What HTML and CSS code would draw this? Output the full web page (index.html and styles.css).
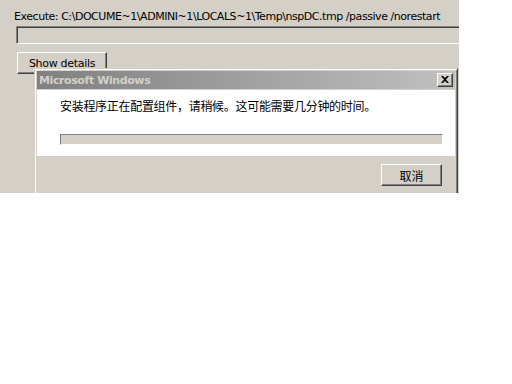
FILE: index.html
```html
<!DOCTYPE html>
<html>
<head>
<meta charset="utf-8">
<link rel="stylesheet" href="styles.css">
</head>
<body>
<div class="window">
  <div class="exec">Execute: C:\DOCUME~1\ADMINI~1\LOCALS~1\Temp\nspDC.tmp /passive /norestart</div>
  <div class="bar"></div>
  <div class="btn show"><span>Show <u>d</u>etails</span></div>

  <div class="dialog">
    <div class="title">
      <span class="title-text">Microsoft Windows</span>
      <span class="close"><svg width="8" height="7" viewBox="0 0 8 7"><path d="M0 0h2l2 2 2-2h2L5 3.5 8 7H6L4 5 2 7H0l3-3.5z" fill="#000"/></svg></span>
    </div>
    <div class="panel">
      <div class="msg">安装程序正在配置组件，请稍候。这可能需要几分钟的时间。</div>
      <div class="progress"></div>
    </div>
    <div class="footer">
      <div class="btn cancel"><span>取消</span></div>
    </div>
  </div>
</div>
</body>
</html>
```

FILE: styles.css
```css
html, body {
  margin: 0;
  padding: 0;
  background: #ffffff;
}
.window {
  position: relative;
  width: 459px;
  height: 193px;
  background: #d4d0c8;
  overflow: hidden;
  font-family: "DejaVu Sans", "Liberation Sans", sans-serif;
  font-size: 11px;
  color: #000;
}
.exec {
  padding: 10px 0 0 14px;
  height: 16px;
  line-height: 13px;
  white-space: nowrap;
  letter-spacing: -0.45px;
}
.bar {
  margin-left: 16px;
  width: 460px;
  height: 16px;
  border-top: 1px solid #808080;
  border-left: 1px solid #808080;
  border-bottom: 1px solid #ffffff;
  box-shadow: inset 1px 1px #404040;
}
.btn {
  box-sizing: border-box;
  border: 1px solid;
  border-color: #ffffff #404040 #404040 #ffffff;
  box-shadow: inset -1px -1px #808080;
  background: #d4d0c8;
  display: flex;
  align-items: center;
  justify-content: center;
}
.show {
  margin: 8px 0 0 17px;
  width: 90px;
  height: 22px;
  letter-spacing: -0.3px;
}
.show u {
  text-decoration-thickness: 1px;
  text-underline-offset: 1px;
}
.dialog {
  position: absolute;
  left: 34px;
  top: 68px;
  width: 424px;
  height: 150px;
  box-sizing: border-box;
  border: 1px solid;
  border-color: #d4d0c8 #404040 #404040 #d4d0c8;
  box-shadow: inset 1px 1px #ffffff, inset -1px -1px #808080;
  padding: 2px;
  background: #d4d0c8;
}
.title {
  height: 18px;
  background: linear-gradient(to right, #808080, #c0c0c0);
  display: flex;
  align-items: center;
  justify-content: space-between;
  padding: 0 2px 0 2px;
}
.title-text {
  color: #d4d0c8;
  font-weight: bold;
  letter-spacing: -0.4px;
}
.close {
  box-sizing: border-box;
  width: 16px;
  height: 14px;
  border: 1px solid;
  border-color: #ffffff #404040 #404040 #ffffff;
  box-shadow: inset -1px -1px #808080;
  background: #d4d0c8;
  display: flex;
  align-items: center;
  justify-content: center;
}
.close svg {
  display: block;
  margin: 0 1px 1px 0;
}
.panel {
  margin-top: 1px;
  height: 66px;
  background: #ffffff;
  padding: 0 12px 0 23px;
  box-sizing: border-box;
  display: flex;
  flex-direction: column;
}
.msg {
  font-family: "Noto Sans CJK SC", sans-serif;
  font-size: 12px;
  line-height: 14px;
  margin-top: 9px;
  letter-spacing: -0.3px;
}
.progress {
  margin-top: 21px;
  height: 11px;
  box-sizing: border-box;
  border: 1px solid;
  border-color: #808080 #ffffff #ffffff #808080;
  background: #d4d0c8;
}
.footer {
  display: flex;
  justify-content: flex-end;
  padding: 8px 13px 0 0;
}
.cancel {
  width: 61px;
  height: 22px;
  font-family: "Noto Sans CJK SC", sans-serif;
  font-size: 12px;
}
```
